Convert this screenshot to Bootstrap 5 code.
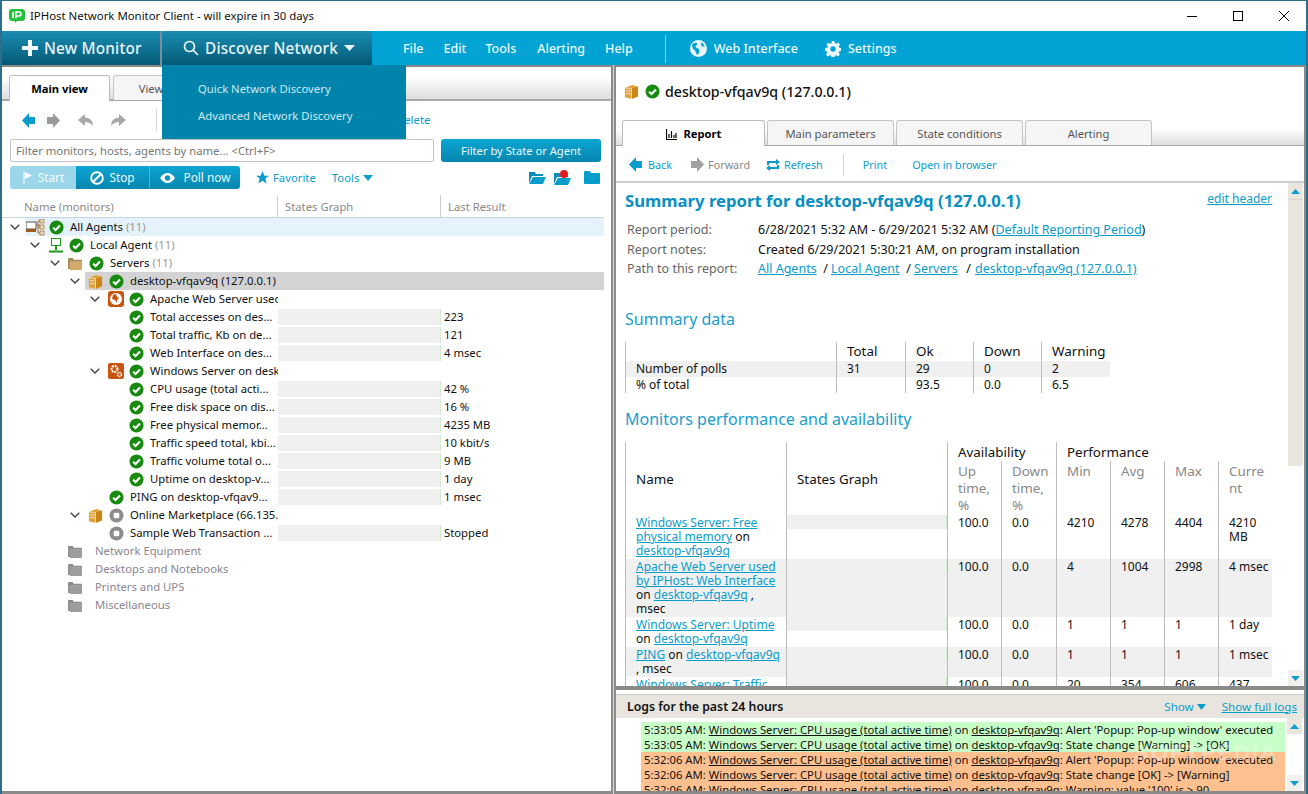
<!DOCTYPE html>
<html lang="en"><head><meta charset="utf-8"><title>IPHost Network Monitor Client</title>
<link href="https://cdn.jsdelivr.net/npm/bootstrap@5.3.0/dist/css/bootstrap.min.css" rel="stylesheet">
<style>
:root{--ui:"Noto Sans","Open Sans",sans-serif;--blu:#0a9ccb;}
html,body{height:100%;margin:0;overflow:hidden}
body{font:11.3px/14px var(--ui);color:#111;background:#fff}
.win{width:1308px;height:794px;border:solid #2f6d8c;border-width:1px 2px 0 2px;overflow:hidden;position:relative}
.ttl{height:30px;padding-left:7px;font-size:11.4px}
.ttl svg{margin-right:5px}
.wctl{margin-right:-3px}
.wc{width:46px;height:30px}
.mbar{height:34px;background:#00a3d3;color:#e9f7fc}
.bigbtn{height:34px;background:linear-gradient(#1a8db3,#045a76);color:#e8f6fb;font-size:15.300px;font-weight:500;letter-spacing:.2px;border-right:2px solid #7a8e96}
.nm1{width:160px;padding-left:20px;gap:6px}
.nm2{width:210px;padding-left:21px;gap:6px;border:0}
.mitem{font-size:12.5px;color:#eefafe;font-weight:500;padding-top:1px}
.m1{margin-left:31px}.m2{margin-left:20px}.m3{margin-left:19px}.m4{margin-left:21px}
.msep{width:1px;height:28px;background:#7fd0ea;margin:0 24px 0 32px}
.gl{margin-right:7px}
.gr2{margin:0 7px 0 27px;color:#eefafe}
.menu2{--bs-dropdown-bg:#0084ac;background:#0084ac;border:0;border-radius:0;position:absolute;left:160px;top:64px;width:244px;height:74px;padding:14px 0 0 36px;margin:0;display:block;z-index:5}
.menu2 a{display:block;height:27px;line-height:20px;color:#cdeaf4;font-size:11.3px;text-decoration:none}
.zone{height:729px}
.lpane{width:609px;height:729px;border-top:2px solid #8a8a8a;border-bottom:3px solid #8a8a8a;flex:none}
.split{width:5px;flex:none;background:linear-gradient(90deg,#8a8a8a 0 2px,#d9d9d9 2px 3px,#8a8a8a 3px)}
.rpane{width:690px;border-top:2px solid #8a8a8a;border-right:2px solid #8a8a8a;flex:none}
.tabstrip{height:34px;background:linear-gradient(#fff 30%,#dedede);border-bottom:2px solid #a9a9a9;padding:8px 0 0 7px;gap:3px;flex-wrap:nowrap}
.tabstrip .nav-link,.tabstrip2 .nav-link{height:25px;padding:0;border:1px solid #c4c4c4;border-bottom:0;border-radius:3px 3px 0 0;background:#f5f5f5;color:#555;font-size:11.200px;line-height:26px;text-align:center;margin:0}
.tabstrip .nav-link.active,.tabstrip2 .nav-link.active{background:#fff;color:#000;font-weight:700;border-color:#bbb;height:26px}
.tools1{height:38px;padding-left:20px}
.tools1 svg{flex:none}
.vsep{width:1px;height:22px;background:#d5d5d5}
.del{margin-left:239px;color:var(--blu)}
.frow{height:23px;padding-left:8px;gap:7px}
.finp{width:424px;height:23px;padding:0 5px;border:1px solid #c3c3c3;border-radius:2px;font-size:11.300px;color:#777;line-height:20px}
.finp::placeholder{color:#777}
.bt{--bs-btn-color:#eaf8fd;background:linear-gradient(#0aa5d4,#0786ad);color:#eaf8fd;border:0;border-radius:3px;font-size:11.800px;line-height:23px;padding:0;height:23px}
.bt:hover{color:#fff;background:#0786ad}
.fbtn{width:160px;font-size:11.200px}
.arow{height:23px;margin-top:4px;padding:0 2px 0 8px;width:600px}
.bg3 .bt{border-radius:0;display:flex;align-items:center;justify-content:center;gap:5px;border-right:1px solid #4db6d8}
.bg3 .bt:first-child{background:#9bd6ea;width:67px;border-radius:3px 0 0 3px;color:#f0fafd;border:0}
.bg3 .b2{width:74px;flex:none}
.bg3 .b3{width:91px;flex:none;border-radius:0 3px 3px 0;border:0;border-left:1px solid #4db6d8}
.lnk{color:var(--blu);font-size:11.300px}
.thead{height:23px;margin-top:6px;border-bottom:1px solid #c3d4e2;width:602px;color:#8a8a8a}
.thead>div{height:22px;line-height:24px}
.th1{width:276px;padding-left:22px;border-right:1px solid #ccc}
.th2{width:163px;padding-left:7px;border-right:1px solid #ccc}
.th3{padding-left:7px}
.trow{height:18px;width:602px;line-height:18px;white-space:nowrap;font-size:11.300px}
.chv{width:21px;flex:none;display:flex;align-items:center;justify-content:center}
.slot{width:21px;flex:none;display:flex;align-items:center;justify-content:center}
.slot2{width:20px;flex:none;display:flex;align-items:center;justify-content:center}
.tmain{flex:1;display:flex;min-width:0}
.tnm{display:flex;flex:none;overflow:hidden}
.tnm b{font-weight:400;margin-left:4px;overflow:hidden}
.cnt{color:#999}
.gcell{width:163px;flex:none;padding:1px 0}
.gcell i{display:block;height:16px;background:#f0f0f0;border-right:1px solid #cfeccf}
.rcell{padding-left:3px}
.lv0{padding-left:2px}.lv0 .tnm{width:253px}
.lv1{padding-left:22px}.lv1 .tnm{width:233px}
.lv2{padding-left:42px}.lv2 .tnm{width:213px}
.lv3{padding-left:62px}.lv3 .tnm{width:193px}
.lv4{padding-left:82px}.lv4 .tnm{width:173px}
.rsel{background:#d3d3d3}
.rall{background:#e4f2fb}
.grayt{color:#8d8590}
.grayt b{margin-left:9px}
.rhead{height:53px;padding:0 0 4px 8px;gap:6px;font-size:14.200px;font-weight:500}
.rhead span{margin-left:-1px}
.tabstrip2{height:26px;background:linear-gradient(#fff,#fff 0%,#fff 35%,#dedede);border-bottom:1px solid #a9a9a9;padding:0 0 0 6px;gap:2px;flex-wrap:nowrap}
.tabstrip2 .nav-link{height:25px}
.tabstrip2 .nav-link.active{height:26px}
.rnav{height:37px;border-bottom:2px solid #cfcfcf;padding:2px 0 0 13px;color:var(--blu);font-size:10.800px;line-height:14px}
.rnav .vsep{margin:0 19px 0 20px}
.bk{margin-right:6px}
.fw{margin:0 4px 0 19px}
.rf{margin:0 4px 0 16px}
.opn{margin-left:25px}
.gr{color:#888}
.rpt{height:503px;overflow:hidden}
.rbody{width:672px;padding:0 0 0 9px;overflow:hidden;font-size:12px}
.rttl{height:40px;padding-top:7px;padding-right:16px}
.rttl h5{margin:0;font:700 16.700px/22px var(--ui);color:#0a8fc0}
.rttl a{font-size:12px;padding-top:2px}
.rttl a,.rbody a{color:#0a9ccb}
.rmeta{display:grid;grid-template-columns:131px 1fr;padding-left:2px;row-gap:5.500px;line-height:14px;font-size:12.500px}
.rmeta dt{font-weight:400;color:#666;margin:0}
.rmeta dd{margin:0}
.pth{margin:0 1px 0 2px}
.sect{font:400 16px/20px var(--ui);color:#1b9dcc;margin:0}
.s1{margin-top:33px;margin-bottom:13px}
.s2{margin-top:16px;margin-bottom:13px}
.tb1,.tb2{border-collapse:collapse;table-layout:fixed;line-height:14px;font-size:12px}
.tb1 td,.tb1 th,.tb2 td,.tb2 th{border-left:1px solid #bdbdbd;padding:1px 0 1px 10px;vertical-align:top;font-weight:400}
.tb1{width:484px}
.tb1 th{font-size:13.400px;height:19px;padding-top:2px;padding-bottom:0;vertical-align:top}
.tb1 td{height:16px}
.stripe td{background:#f0f0f0}
.tb2{width:646px}
.tb2 .hh{font-size:13.400px}
.tb2 .sub{color:#888;font-size:13.400px;line-height:17px;padding-top:2px;word-break:break-word}
.tb2 td{padding-top:1px;padding-bottom:1px}
.gb{padding:0!important}
.gb i{display:block;height:14px;background:#f0f0f0;border-right:1px solid #cfeccf}
.stripe .gb i{background:#f0f0f0}
.stripe .gb{border-right:0}
.sb{width:15px;flex:none;background:#fff;display:flex;flex-direction:column;justify-content:space-between;align-items:center}
.sbr{margin-right:1px;height:503px}
.up,.dn{height:16px;display:flex;align-items:center;justify-content:center;width:15px;background:#e9e6df}
.dn{background:#f2f0ec}
.thumb{height:267px;background:#e9e6df;border-top:1px solid #d8d5ce;flex:1 1 auto;max-height:267px}
.spc{flex:1}
.hsplit{height:9px;background:linear-gradient(#8a8a8a 0 4px,#fff 4px 8px,#cfcfcf 8px)}
.lhead{height:23px;background:#e8e5df;padding:0 7px 0 11px;font-weight:600;font-size:12.300px}
.lhead a{color:#0a9ccb;font-weight:400;font-size:11.600px}
.lbody{height:73px;overflow:hidden;position:relative}
.lrows{width:644px;margin:4px 0 0 25px;font-size:11.300px}
.lr{height:15px;line-height:15px;padding-left:3px;white-space:nowrap;overflow:hidden}
.lg{background:#c8ffc8}.lo{background:#ffc090}
.lr a{color:#111}
.wm{position:absolute;right:26px;top:24px;color:#fff;opacity:.3;font:700 22px/22px "Liberation Sans",sans-serif;letter-spacing:2px}
.lsb{position:absolute;right:2px;top:0;height:73px}
.lbot{height:3px;background:#8a8a8a}
</style></head><body>
<svg width="0" height="0" class="position-absolute">
<symbol id="chk" viewBox="0 0 16 16"><circle cx="8" cy="8" r="7.500" fill="#188a10"/><path d="M4.400 8.200 7 10.700 11.700 5.800" fill="none" stroke="#fff" stroke-width="2.200"/></symbol>
<symbol id="stp" viewBox="0 0 16 16"><circle cx="8" cy="8" r="7.500" fill="#8d8d8d"/><rect x="5" y="5" width="6" height="6" rx="1.500" fill="#fff"/></symbol>
<symbol id="chv" viewBox="0 0 10 6"><path d="M.7.7 5 5 9.300.7" fill="none" stroke="#444" stroke-width="1.400"/></symbol>
<symbol id="box" viewBox="0 0 16 16"><path d="M1 4 9 1l6 2v10l-7 3-7-2z" fill="#e0a23c"/><path d="M8 5 15 3v10l-7 3z" fill="#c98518"/><path d="M1 4l7 1v11" fill="none" stroke="#fff" stroke-width=".7"/><path d="M2 7l5 .7M2 10l5 .7" stroke="#fff" stroke-width=".7"/></symbol>
<symbol id="fld" viewBox="0 0 16 14"><path d="M0 2q0-1 1-1h4l1 2h8q1 0 1 1v1H2v8H0z" fill="#a58a58"/><path d="M2 5h13v8q0 1-1 1H2z" fill="#d3aa6c"/></symbol>
<symbol id="fgr" viewBox="0 0 16 14"><path d="M0 2q0-1 1-1h4l1 2h8q1 0 1 1v1H2v8H0z" fill="#8b8b8b"/><path d="M2 5h13v8q0 1-1 1H2z" fill="#9d9d9d"/></symbol>
<symbol id="gear" viewBox="0 0 16 16"><path d="M6.600 0h2.800l.4 2.200 1.300.6 1.900-1.300 2 2-1.300 1.900.6 1.300 2.200.4v2.800l-2.200.4-.6 1.300 1.300 1.900-2 2-1.900-1.300-1.300.6-.4 2.200H6.600l-.4-2.200-1.300-.6L3 15.500l-2-2 1.300-1.900-.6-1.300L0 9.900V7.100l2.200-.4.6-1.300L1.500 3.500l2-2L5.400 2.800l1.300-.6z" fill="currentColor"/><circle cx="8" cy="8" r="2.700" fill="#00a3d3"/></symbol>
</svg>
<div class="win d-flex flex-column">
 <div class="ttl d-flex align-items-center">
  <svg width="16" height="16" viewBox="0 0 16 16"><path d="M3 1h10q3 0 3 3v6q0 3-3 3H8l-2 2v-2H3q-3 0-3-3V4q0-3 3-3z" fill="#25c13c"/><path d="M4 4v6M7 10V4h3q2 0 2 2t-2 2H7" fill="none" stroke="#fff" stroke-width="1.600"/></svg>
  <span>IPHost Network Monitor Client - will expire in 30 days</span>
  <div class="ms-auto d-flex wctl" aria-hidden="true">
   <div class="wc d-flex align-items-center justify-content-center"><svg width="12" height="12"><path d="M1 6.500h10" stroke="#000"/></svg></div>
   <div class="wc d-flex align-items-center justify-content-center"><svg width="12" height="12"><rect x="1.500" y="1.500" width="9" height="9" fill="none" stroke="#000"/></svg></div>
   <div class="wc d-flex align-items-center justify-content-center"><svg width="12" height="12"><path d="M1 1l10 10M11 1 1 11" stroke="#000"/></svg></div>
  </div>
 </div>
 <div class="mbar d-flex align-items-center">
  <div class="bigbtn nm1 d-flex align-items-center"><svg width="16" height="16" viewBox="0 0 16 16"><path d="M6 0h4v6h6v4h-6v6H6v-6H0V6h6z" fill="#f2fafd"/></svg><span>New Monitor</span></div>
  <div class="bigbtn nm2 d-flex align-items-center"><svg width="16" height="16" viewBox="0 0 16 16" fill="none" stroke="#e8f6fb" stroke-width="1.700"><circle cx="6.500" cy="6.500" r="5"/><path d="m10 10 5 5"/></svg><span>Discover Network</span><svg width="11" height="6" viewBox="0 0 11 6"><path d="M0 0h11L5.500 6z" fill="#e8f6fb"/></svg></div>
  <div class="d-flex align-items-center mitem">
   <span class="m1">File</span><span class="m2">Edit</span><span class="m3">Tools</span><span class="m4">Alerting</span><span class="m2">Help</span>
   <div class="msep"></div>
   <svg width="17" height="17" viewBox="0 0 16 16" class="gl"><circle cx="8" cy="8" r="8" fill="#e9f7fc"/><path d="M2 4q3-2 5-1 0 2-2 3 1 2 3 2l1 3-2 3q-2-2-2-4-3-1-3-6zM10 2q3 1 4 4l-3 0z" fill="#00a3d3"/></svg><span>Web Interface</span>
   <svg width="16" height="16" class="gr2"><use href="#gear"/></svg><span>Settings</span>
  </div>
 </div>
 <div class="dropdown-menu show menu2"><a class="dropdown-item p-0" href="#">Quick Network Discovery</a><a class="dropdown-item p-0" href="#">Advanced Network Discovery</a></div>
 <div class="zone d-flex">
  <div class="lpane">
   <ul class="nav tabstrip">
    <li class="nav-item"><a class="nav-link active" style="width:101px" href="#">Main view</a></li>
    <li class="nav-item"><a class="nav-link" style="width:76px" href="#">View</a></li>
   </ul>
   <div class="tools1 d-flex align-items-center">
    <svg width="13" height="15" viewBox="0 0 13 15"><path d="M0 7.500 7 0v4h6v7H7v4z" fill="#0a9ccb"/></svg>
    <svg width="13" height="15" viewBox="0 0 13 15" style="margin-left:12px"><path d="M13 7.500 6 0v4H0v7h6v4z" fill="#9a9a9a"/></svg>
    <svg width="16" height="13" viewBox="0 0 16 13" style="margin-left:18px"><path d="M7 0 0 6l7 6V8q5 0 8 4 0-8-8-8.500z" fill="#a8a8a8"/></svg>
    <svg width="16" height="13" viewBox="0 0 16 13" style="margin-left:16px"><path d="M9 0l7 6-7 6V8q-5 0-8 4 0-8 8-8.500z" fill="#a8a8a8"/></svg>
    <div class="vsep" style="margin-left:30px"></div>
    <span class="del">Delete</span>
   </div>
   <div class="frow d-flex">
    <input class="form-control finp" placeholder="Filter monitors, hosts, agents by name... &lt;Ctrl+F&gt;" aria-label="Filter">
    <button class="btn bt fbtn">Filter by State or Agent</button>
   </div>
   <div class="arow d-flex align-items-center">
    <div class="btn-group bg3">
     <button class="btn bt"><svg width="10" height="13" viewBox="0 0 10 13"><path d="M1 0v13" stroke="#fff"/><path d="M2 1l7 3.500-7 3.500z" fill="#fff"/></svg>Start</button>
     <button class="btn bt b2"><svg width="14" height="14" viewBox="0 0 14 14" fill="none" stroke="#fff" stroke-width="2"><circle cx="7" cy="7" r="5.800"/><path d="m3 11 8-8"/></svg>Stop</button>
     <button class="btn bt b3"><svg width="15" height="10" viewBox="0 0 15 10" class="me-1"><path d="M0 5q3.500-5 7.500-5T15 5q-3.500 5-7.500 5T0 5z" fill="#fff"/><circle cx="7.500" cy="5" r="2.700" fill="#0796c2"/></svg>Poll now</button>
    </div>
    <svg width="13" height="13" viewBox="0 0 14 14" class="ms-3"><path d="M7 0l2 5h5l-4 3 1.500 5.500L7 10.500l-4.500 3L4 8 0 5h5z" fill="#0a9ccb"/></svg>
    <span class="lnk ms-1">Favorite</span>
    <span class="lnk ms-3">Tools</span><svg width="10" height="6" viewBox="0 0 10 6" class="ms-1"><path d="M0 0h10L5 6z" fill="#0a9ccb"/></svg>
    <svg width="17" height="13" viewBox="0 0 17 13" class="ms-auto"><path d="M0 1h6l1 2h7v2H3L0 12z" fill="#0a8fbc"/><path d="M4 6h13l-3 7H0z" fill="#0a9ccb"/></svg>
    <svg width="18" height="15" viewBox="0 0 18 15" class="mx-2"><path d="M0 3h6l1 2h7v2H3L0 14z" fill="#0a8fbc"/><path d="M4 8h13l-3 7H0z" fill="#0a9ccb"/><circle cx="10" cy="4" r="4" fill="#e31b1b"/></svg>
    <svg width="16" height="13" viewBox="0 0 16 13" class="ms-1"><path d="M0 1q0-1 1-1h5l1 2h8q1 0 1 1v9q0 1-1 1H1q-1 0-1-1z" fill="#0a9ccb"/></svg>
   </div>
   <div class="thead d-flex"><div class="th1">Name (monitors)</div><div class="th2">States Graph</div><div class="th3">Last Result</div></div>

   <div class="trow d-flex lv0"><span class="chv"><svg width="10" height="6"><use href="#chv"/></svg></span><div class="tmain rall"><div class="tnm"><span class="slot"><svg width="19" height="17" viewBox="0 0 19 17"><rect x="0" y="3" width="10" height="7" fill="#fff" stroke="#555"/><rect x="0" y="10" width="10" height="3" fill="#a05a1c"/><path d="M10 6h4M12 2v12M12 2h2M12 8h2M12 14h2" stroke="#a06a30" fill="none"/><rect x="14" y="0" width="4" height="4" fill="#eeddc4" stroke="#a06a30" stroke-width=".7"/><rect x="14" y="6" width="4" height="4" fill="#eeddc4" stroke="#a06a30" stroke-width=".7"/><rect x="14" y="12" width="4" height="4" fill="#eeddc4" stroke="#a06a30" stroke-width=".7"/></svg></span><span class="slot2"><svg width="15" height="15"><use href="#chk"/></svg></span><b>All Agents <span class="cnt">(11)</span></b></div></div></div>

   <div class="trow d-flex lv1"><span class="chv"><svg width="10" height="6"><use href="#chv"/></svg></span><div class="tmain"><div class="tnm"><span class="slot"><svg width="14" height="15" viewBox="0 0 14 15"><rect x="2.500" y=".5" width="9" height="7" fill="#fff" stroke="#1f9a1f"/><path d="M7 8v4M0 13.500h14" stroke="#1f9a1f" stroke-width="2"/></svg></span><span class="slot2"><svg width="15" height="15"><use href="#chk"/></svg></span><b>Local Agent <span class="cnt">(11)</span></b></div></div></div>

   <div class="trow d-flex lv2"><span class="chv"><svg width="10" height="6"><use href="#chv"/></svg></span><div class="tmain"><div class="tnm"><span class="slot"><svg width="15" height="13"><use href="#fld"/></svg></span><span class="slot2"><svg width="15" height="15"><use href="#chk"/></svg></span><b>Servers <span class="cnt">(11)</span></b></div></div></div>

   <div class="trow d-flex lv3"><span class="chv"><svg width="10" height="6"><use href="#chv"/></svg></span><div class="tmain rsel"><div class="tnm"><span class="slot"><svg width="15" height="15"><use href="#box"/></svg></span><span class="slot2"><svg width="15" height="15"><use href="#chk"/></svg></span><b>desktop-vfqav9q (127.0.0.1)</b></div></div></div>

   <div class="trow d-flex lv4"><span class="chv"><svg width="10" height="6"><use href="#chv"/></svg></span><div class="tmain"><div class="tnm"><span class="slot"><svg width="16" height="16" viewBox="0 0 16 16"><rect width="16" height="16" rx="3" fill="#c8540e"/><circle cx="8" cy="8" r="6" fill="#fff"/><path d="M5 4l3-1 1 3 2 1-2 2 0 3-2-3-3-1z" fill="#c8540e"/></svg></span><span class="slot2"><svg width="15" height="15"><use href="#chk"/></svg></span><b>Apache Web Server used by IPHost</b></div></div></div>

   <div class="trow d-flex lv4"><span class="chv"></span><div class="tmain"><div class="tnm"><span class="slot"></span><span class="slot2"><svg width="15" height="15"><use href="#chk"/></svg></span><b>Total accesses on des...</b></div><div class="gcell"><i></i></div><div class="rcell">223</div></div></div>
   <div class="trow d-flex lv4"><span class="chv"></span><div class="tmain"><div class="tnm"><span class="slot"></span><span class="slot2"><svg width="15" height="15"><use href="#chk"/></svg></span><b>Total traffic, Kb on de...</b></div><div class="gcell"><i></i></div><div class="rcell">121</div></div></div>
   <div class="trow d-flex lv4"><span class="chv"></span><div class="tmain"><div class="tnm"><span class="slot"></span><span class="slot2"><svg width="15" height="15"><use href="#chk"/></svg></span><b>Web Interface on des...</b></div><div class="gcell"><i></i></div><div class="rcell">4 msec</div></div></div>

   <div class="trow d-flex lv4"><span class="chv"><svg width="10" height="6"><use href="#chv"/></svg></span><div class="tmain"><div class="tnm"><span class="slot"><svg width="16" height="16" viewBox="0 0 16 16"><rect width="16" height="16" rx="2" fill="#c8540e"/><circle cx="6.500" cy="6" r="3" fill="none" stroke="#fff" stroke-width="2" stroke-dasharray="2 .8"/><circle cx="11.500" cy="11.500" r="2" fill="none" stroke="#fff" stroke-width="1.500" stroke-dasharray="1.500 .6"/></svg></span><span class="slot2"><svg width="15" height="15"><use href="#chk"/></svg></span><b>Windows Server on desktop-vfqav9q</b></div></div></div>

   <div class="trow d-flex lv4"><span class="chv"></span><div class="tmain"><div class="tnm"><span class="slot"></span><span class="slot2"><svg width="15" height="15"><use href="#chk"/></svg></span><b>CPU usage (total acti...</b></div><div class="gcell"><i></i></div><div class="rcell">42 %</div></div></div>
   <div class="trow d-flex lv4"><span class="chv"></span><div class="tmain"><div class="tnm"><span class="slot"></span><span class="slot2"><svg width="15" height="15"><use href="#chk"/></svg></span><b>Free disk space on dis...</b></div><div class="gcell"><i></i></div><div class="rcell">16 %</div></div></div>
   <div class="trow d-flex lv4"><span class="chv"></span><div class="tmain"><div class="tnm"><span class="slot"></span><span class="slot2"><svg width="15" height="15"><use href="#chk"/></svg></span><b>Free physical memor...</b></div><div class="gcell"><i></i></div><div class="rcell">4235 MB</div></div></div>
   <div class="trow d-flex lv4"><span class="chv"></span><div class="tmain"><div class="tnm"><span class="slot"></span><span class="slot2"><svg width="15" height="15"><use href="#chk"/></svg></span><b>Traffic speed total, kbi...</b></div><div class="gcell"><i></i></div><div class="rcell">10 kbit/s</div></div></div>
   <div class="trow d-flex lv4"><span class="chv"></span><div class="tmain"><div class="tnm"><span class="slot"></span><span class="slot2"><svg width="15" height="15"><use href="#chk"/></svg></span><b>Traffic volume total o...</b></div><div class="gcell"><i></i></div><div class="rcell">9 MB</div></div></div>
   <div class="trow d-flex lv4"><span class="chv"></span><div class="tmain"><div class="tnm"><span class="slot"></span><span class="slot2"><svg width="15" height="15"><use href="#chk"/></svg></span><b>Uptime on desktop-v...</b></div><div class="gcell"><i></i></div><div class="rcell">1 day</div></div></div>

   <div class="trow d-flex lv3"><span class="chv"></span><div class="tmain"><div class="tnm"><span class="slot"></span><span class="slot2"><svg width="15" height="15"><use href="#chk"/></svg></span><b>PING on desktop-vfqav9...</b></div><div class="gcell"><i></i></div><div class="rcell">1 msec</div></div></div>

   <div class="trow d-flex lv3"><span class="chv"><svg width="10" height="6"><use href="#chv"/></svg></span><div class="tmain"><div class="tnm"><span class="slot"><svg width="15" height="15"><use href="#box"/></svg></span><span class="slot2"><svg width="15" height="15"><use href="#stp"/></svg></span><b>Online Marketplace (66.135.205.14)</b></div></div></div>
   <div class="trow d-flex lv3"><span class="chv"></span><div class="tmain"><div class="tnm"><span class="slot"></span><span class="slot2"><svg width="15" height="15"><use href="#stp"/></svg></span><b>Sample Web Transaction ...</b></div><div class="gcell"><i></i></div><div class="rcell">Stopped</div></div></div>

   <div class="trow d-flex lv2 grayt"><span class="chv"></span><div class="tmain"><div class="tnm"><span class="slot"><svg width="15" height="13"><use href="#fgr"/></svg></span><b>Network Equipment</b></div></div></div>
   <div class="trow d-flex lv2 grayt"><span class="chv"></span><div class="tmain"><div class="tnm"><span class="slot"><svg width="15" height="13"><use href="#fgr"/></svg></span><b>Desktops and Notebooks</b></div></div></div>
   <div class="trow d-flex lv2 grayt"><span class="chv"></span><div class="tmain"><div class="tnm"><span class="slot"><svg width="15" height="13"><use href="#fgr"/></svg></span><b>Printers and UPS</b></div></div></div>
   <div class="trow d-flex lv2 grayt"><span class="chv"></span><div class="tmain"><div class="tnm"><span class="slot"><svg width="15" height="13"><use href="#fgr"/></svg></span><b>Miscellaneous</b></div></div></div>
  </div>
  <div class="split"></div>
  <div class="rpane d-flex flex-column">
   <div class="rhead d-flex align-items-center"><svg width="15" height="15"><use href="#box"/></svg><svg width="15" height="15"><use href="#chk"/></svg><span>desktop-vfqav9q (127.0.0.1)</span></div>
   <ul class="nav tabstrip2">
    <li class="nav-item"><a class="nav-link active" style="width:143px" href="#"><svg width="11" height="11" viewBox="0 0 11 11" class="me-1"><path d="M.5 0v10.500H11M3 5v4M5.500 2v7M8 6v3M10 4v5" fill="none" stroke="#000" stroke-width="1.200"/></svg> Report</a></li>
    <li class="nav-item"><a class="nav-link" style="width:127px" href="#">Main parameters</a></li>
    <li class="nav-item"><a class="nav-link" style="width:127px" href="#">State conditions</a></li>
    <li class="nav-item"><a class="nav-link" style="width:127px" href="#">Alerting</a></li>
   </ul>
   <div class="rnav d-flex align-items-center">
    <svg width="13" height="15" viewBox="0 0 13 15" class="bk"><path d="M0 7.500 7 0v4h6v7H7v4z" fill="#0a9ccb"/></svg><span>Back</span>
    <svg width="13" height="15" viewBox="0 0 13 15" class="fw"><path d="M13 7.500 6 0v4H0v7h6v4z" fill="#a0a0a0"/></svg><span class="gr">Forward</span>
    <svg width="14" height="12" viewBox="0 0 14 12" class="rf"><path d="M1 6V2h9V0l4 3-4 3V4H3v2zM13 6v4H4v2L0 9l4-3v2h7V6z" fill="#0a9ccb"/></svg><span>Refresh</span>
    <div class="vsep"></div><span>Print</span><span class="opn">Open in browser</span>
   </div>
   <div class="rpt d-flex">
    <div class="rbody">
     <div class="rttl d-flex justify-content-between"><h5>Summary report for desktop-vfqav9q (127.0.0.1)</h5><a href="#">edit header</a></div>
     <dl class="rmeta m-0">
      <dt>Report period:</dt><dd>6/28/2021 5:32 AM - 6/29/2021 5:32 AM (<a href="#">Default Reporting Period</a>)</dd>
      <dt>Report notes:</dt><dd>Created 6/29/2021 5:30:21 AM, on program installation</dd>
      <dt>Path to this report:</dt><dd><a href="#">All Agents</a> &nbsp;/ <a href="#">Local Agent</a> &nbsp;/ <a href="#">Servers</a> <span class="pth">&nbsp;/</span> <a href="#">desktop-vfqav9q (127.0.0.1)</a></dd>
     </dl>
     <h6 class="sect s1">Summary data</h6>
     <table class="tb1"><colgroup><col style="width:211px"><col style="width:69px"><col style="width:68px"><col style="width:68px"><col style="width:68px"></colgroup>
      <tr><th></th><th>Total</th><th>Ok</th><th>Down</th><th>Warning</th></tr>
      <tr class="stripe"><td>Number of polls</td><td>31</td><td>29</td><td>0</td><td>2</td></tr>
      <tr><td>% of total</td><td></td><td>93.5</td><td>0.0</td><td>6.5</td></tr>
     </table>
     <h6 class="sect s2">Monitors performance and availability</h6>
     <table class="tb2"><colgroup><col style="width:161px"><col style="width:161px"><col style="width:54px"><col style="width:55px"><col style="width:54px"><col style="width:54px"><col style="width:54px"><col style="width:53px"></colgroup>
      <tr><th rowspan="2" class="hh align-middle">Name</th><th rowspan="2" class="hh align-middle">States Graph</th><th colspan="2" class="hh" style="padding-top:3px;height:19px">Availability</th><th colspan="4" class="hh" style="padding-top:3px">Performance</th></tr>
      <tr><th class="sub">Up time, %</th><th class="sub">Down time, %</th><th class="sub">Min</th><th class="sub">Avg</th><th class="sub">Max</th><th class="sub">Curre nt</th></tr>
      <tr><td><a href="#">Windows Server: Free physical memory</a> on <a href="#">desktop-vfqav9q</a></td><td class="gb"><i></i></td><td>100.0</td><td>0.0</td><td>4210</td><td>4278</td><td>4404</td><td>4210 MB</td></tr>
      <tr class="stripe"><td><a href="#">Apache Web Server used by IPHost: Web Interface</a> on <a href="#">desktop-vfqav9q</a> , msec</td><td class="gb"><i></i></td><td>100.0</td><td>0.0</td><td>4</td><td>1004</td><td>2998</td><td>4 msec</td></tr>
      <tr><td><a href="#">Windows Server: Uptime</a> on <a href="#">desktop-vfqav9q</a></td><td class="gb"><i></i></td><td>100.0</td><td>0.0</td><td>1</td><td>1</td><td>1</td><td>1 day</td></tr>
      <tr class="stripe"><td><a href="#">PING</a> on <a href="#">desktop-vfqav9q</a> , msec</td><td class="gb"><i></i></td><td>100.0</td><td>0.0</td><td>1</td><td>1</td><td>1</td><td>1 msec</td></tr>
      <tr><td><a href="#">Windows Server: Traffic volume total</a></td><td class="gb"><i></i></td><td>100.0</td><td>0.0</td><td>20</td><td>354</td><td>606</td><td>437</td></tr>
     </table>
    </div>
    <div class="sb ms-auto sbr">
     <div class="up"><svg width="9" height="5" viewBox="0 0 9 5"><path d="M0 5h9L4.500 0z" fill="#0a9ccb"/></svg></div>
     <div class="thumb w-100"></div><div class="spc"></div>
     <div class="dn"><svg width="9" height="5" viewBox="0 0 9 5"><path d="M0 0h9L4.500 5z" fill="#0a9ccb"/></svg></div>
    </div>
   </div>
   <div class="hsplit"></div>
   <div class="lhead d-flex align-items-center"><span>Logs for the past 24 hours</span><a href="#" class="ms-auto text-decoration-none">Show <svg width="9" height="6" viewBox="0 0 9 6"><path d="M0 0h9L4.500 6z" fill="#0a9ccb"/></svg></a><a href="#" class="ms-3">Show full logs</a></div>
   <div class="lbody">
    <div class="lrows">
     <div class="lr lg">5:33:05 AM: <a href="#">Windows Server: CPU usage (total active time)</a> on <a href="#">desktop-vfqav9q</a>: Alert 'Popup: Pop-up window' executed</div>
     <div class="lr lg">5:33:05 AM: <a href="#">Windows Server: CPU usage (total active time)</a> on <a href="#">desktop-vfqav9q</a>: State change [Warning] -&gt; [OK]</div>
     <div class="lr lo">5:32:06 AM: <a href="#">Windows Server: CPU usage (total active time)</a> on <a href="#">desktop-vfqav9q</a>: Alert 'Popup: Pop-up window' executed</div>
     <div class="lr lo">5:32:06 AM: <a href="#">Windows Server: CPU usage (total active time)</a> on <a href="#">desktop-vfqav9q</a>: State change [OK] -&gt; [Warning]</div>
     <div class="lr lo">5:32:06 AM: <a href="#">Windows Server: CPU usage (total active time)</a> on <a href="#">desktop-vfqav9q</a>: Warning: value '100' is &gt; 90</div>
    </div>
    <div class="wm">SOFTPEDIA</div>
    <div class="sb lsb"><div class="up"><svg width="9" height="5" viewBox="0 0 9 5"><path d="M0 5h9L4.500 0z" fill="#0a9ccb"/></svg></div><div class="dn"><svg width="9" height="5" viewBox="0 0 9 5"><path d="M0 0h9L4.500 5z" fill="#0a9ccb"/></svg></div></div>
   </div>
   <div class="lbot"></div>
  </div>
 </div>
</div>
<script src="https://cdn.jsdelivr.net/npm/bootstrap@5.3.0/dist/js/bootstrap.bundle.min.js"></script>
</body></html>
